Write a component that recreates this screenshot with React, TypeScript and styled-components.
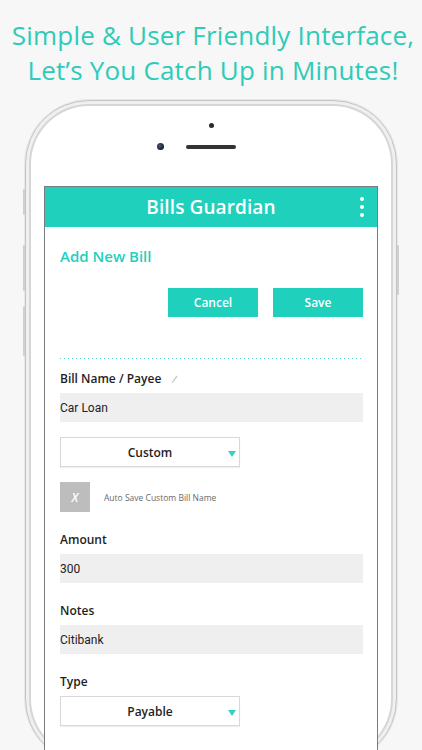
import React from 'react';
import styled, {createGlobalStyle} from 'styled-components';

const GlobalStyle = createGlobalStyle`
  html, body {
    margin: 0;
    padding: 0;
    background: #f7f7f7;
    overflow: hidden;
  }
  body {
    font-family: "Open Sans", "Liberation Sans", sans-serif;
  }
`;

const teal = '#1fd0bc';

const Page = styled.div`
  width: 422px;
  height: 750px;
  overflow: hidden;
  background: #f7f7f7;
  display: flex;
  flex-direction: column;
  align-items: center;
`;

const Headline = styled.h1`
  margin: 18px 0 0;
  padding-left: 4px;
  font-family: "Open Sans", "Liberation Sans", sans-serif;
  font-weight: 400;
  font-size: 26px;
  line-height: 35px;
  letter-spacing: 0.2px;
  color: #2ecbb8;
  text-align: center;
  white-space: nowrap;
`;

const Phone = styled.div`
  position: relative;
  margin-top: 12px;
  width: 372px;
  height: 900px;
  box-sizing: border-box;
  background: #fff;
  border: 1px solid #c4c4c4;
  border-radius: 64px;
  box-shadow: inset 0 0 0 3px #f0f0f0, inset 0 0 0 5px #d6d6d6, 0 0 0 1px #e8e8e8;
  display: flex;
  flex-direction: column;
  align-items: center;
`;

const SideKey = styled.div<{$side: 'left' | 'right'; $top: number; $h: number}>`
  position: absolute;
  top: ${p => p.$top}px;
  ${p => (p.$side === 'left' ? 'left: -3px;' : 'right: -3px;')}
  width: 2px;
  height: ${p => p.$h}px;
  background: #d0d0d0;
  border-radius: 1px;
`;

const Bezel = styled.div`
  height: 85px;
  width: 100%;
  display: flex;
  flex-direction: column;
  align-items: center;
`;

const Sensor = styled.div`
  margin-top: 22px;
  width: 5px;
  height: 5px;
  border-radius: 50%;
  background: #2a2a2a;
`;

const EarRow = styled.div`
  margin-top: 15px;
  display: flex;
  align-items: center;
  gap: 22px;
  margin-left: -30px;
`;

const Camera = styled.div`
  width: 7px;
  height: 7px;
  border-radius: 50%;
  background: radial-gradient(circle at 40% 40%, #4a5a78, #141a28 70%);
`;

const Speaker = styled.div`
  width: 50px;
  height: 4px;
  border-radius: 2px;
  background: #333;
`;

const Screen = styled.div`
  width: 334px;
  flex: 1;
  box-sizing: border-box;
  border: 1px solid #7b7b7b;
  border-bottom: none;
  background: #fff;
  display: flex;
  flex-direction: column;
`;

const AppBar = styled.div`
  position: relative;
  height: 40px;
  background: ${teal};
  display: flex;
  align-items: center;
  justify-content: center;
`;

const AppTitle = styled.div`
  color: #fff;
  font-size: 19px;
  font-weight: 600;
  letter-spacing: 0.1px;
`;

const Kebab = styled.div`
  position: absolute;
  right: 13px;
  top: 10px;
  display: flex;
  flex-direction: column;
  gap: 4px;

  > span {
    width: 4px;
    height: 4px;
    border-radius: 50%;
    background: #fff;
  }
`;

const Form = styled.div`
  padding: 0 14px 0 15px;
  display: flex;
  flex-direction: column;
`;

const SectionTitle = styled.div`
  margin-top: 19px;
  color: ${teal};
  font-size: 15px;
  font-weight: 600;
  line-height: 20px;
`;

const ButtonRow = styled.div`
  margin-top: 22px;
  display: flex;
  justify-content: flex-end;
  gap: 15px;
`;

const ActionButton = styled.button`
  width: 90px;
  height: 29px;
  border: none;
  background: ${teal};
  color: #fff;
  font-family: "Open Sans", "Liberation Sans", sans-serif;
  font-size: 12px;
  font-weight: 600;
  padding: 0;
`;

const Dotted = styled.div`
  margin-top: 41px;
  height: 1px;
  background-image: linear-gradient(to right, #5fd6c8 1px, transparent 1px);
  background-size: 4px 1px;
`;

const Label = styled.div<{$gap: number}>`
  margin-top: ${p => p.$gap}px;
  font-size: 12px;
  font-weight: 600;
  line-height: 14px;
  color: #1e1e1e;
  display: flex;
  align-items: center;
  gap: 10px;
`;

const TextInput = styled.div`
  margin-top: 7px;
  height: 29px;
  background: #efefef;
  display: flex;
  align-items: center;
  font-family: Roboto, "Liberation Sans", sans-serif;
  font-size: 12px;
  color: #222;
`;

const Select = styled.div<{$gap: number}>`
  margin-top: ${p => p.$gap}px;
  position: relative;
  width: 180px;
  height: 30px;
  box-sizing: border-box;
  border: 1px solid #d8d8d8;
  box-shadow: 0 1px 1px rgba(0, 0, 0, 0.06);
  display: flex;
  align-items: center;
  justify-content: center;
  font-size: 12px;
  font-weight: 600;
  color: #1e1e1e;
`;

const Caret = styled.span`
  position: absolute;
  right: 3px;
  top: 13px;
  width: 0;
  height: 0;
  border-left: 4px solid transparent;
  border-right: 4px solid transparent;
  border-top: 6px solid #2fd3bf;
`;

const CheckRow = styled.div`
  margin-top: 15px;
  display: flex;
  align-items: center;
  gap: 14px;
`;

const CheckBox = styled.div`
  width: 30px;
  height: 30px;
  background: #bdbdbd;
  color: #fff;
  display: flex;
  align-items: center;
  justify-content: center;
  font-size: 12px;
  font-style: italic;
  font-weight: 600;
`;

const CheckText = styled.span`
  font-size: 8.5px;
  color: #6a6a6a;
`;

const EditIcon = () => (
  <svg width="7" height="9" viewBox="0 0 7 9">
    <path d="M5.5 0.5 L6.5 1.5 L2 7.5 L0.8 8.2 L1 6.9 Z" fill="#c4c4c4" />
  </svg>
);

export default function App() {
  return (
    <Page>
      <GlobalStyle />
      <Headline>
        Simple &amp; User Friendly Interface,
        <br />
        Let’s You Catch Up in Minutes!
      </Headline>
      <Phone>
        <SideKey $side="left" $top={88} $h={26} />
        <SideKey $side="left" $top={144} $h={46} />
        <SideKey $side="left" $top={205} $h={50} />
        <SideKey $side="right" $top={144} $h={50} />
        <Bezel>
          <Sensor />
          <EarRow>
            <Camera />
            <Speaker />
          </EarRow>
        </Bezel>
        <Screen>
          <AppBar>
            <AppTitle>Bills Guardian</AppTitle>
            <Kebab>
              <span />
              <span />
              <span />
            </Kebab>
          </AppBar>
          <Form>
            <SectionTitle>Add New Bill</SectionTitle>
            <ButtonRow>
              <ActionButton>Cancel</ActionButton>
              <ActionButton>Save</ActionButton>
            </ButtonRow>
            <Dotted />
            <Label $gap={13}>
              Bill Name / Payee <EditIcon />
            </Label>
            <TextInput>Car Loan</TextInput>
            <Select $gap={15}>
              Custom
              <Caret />
            </Select>
            <CheckRow>
              <CheckBox>X</CheckBox>
              <CheckText>Auto Save Custom Bill Name</CheckText>
            </CheckRow>
            <Label $gap={21}>Amount</Label>
            <TextInput>300</TextInput>
            <Label $gap={21}>Notes</Label>
            <TextInput>Citibank</TextInput>
            <Label $gap={21}>Type</Label>
            <Select $gap={7}>
              Payable
              <Caret />
            </Select>
            <Label $gap={22}>Category</Label>
          </Form>
        </Screen>
      </Phone>
    </Page>
  );
}
